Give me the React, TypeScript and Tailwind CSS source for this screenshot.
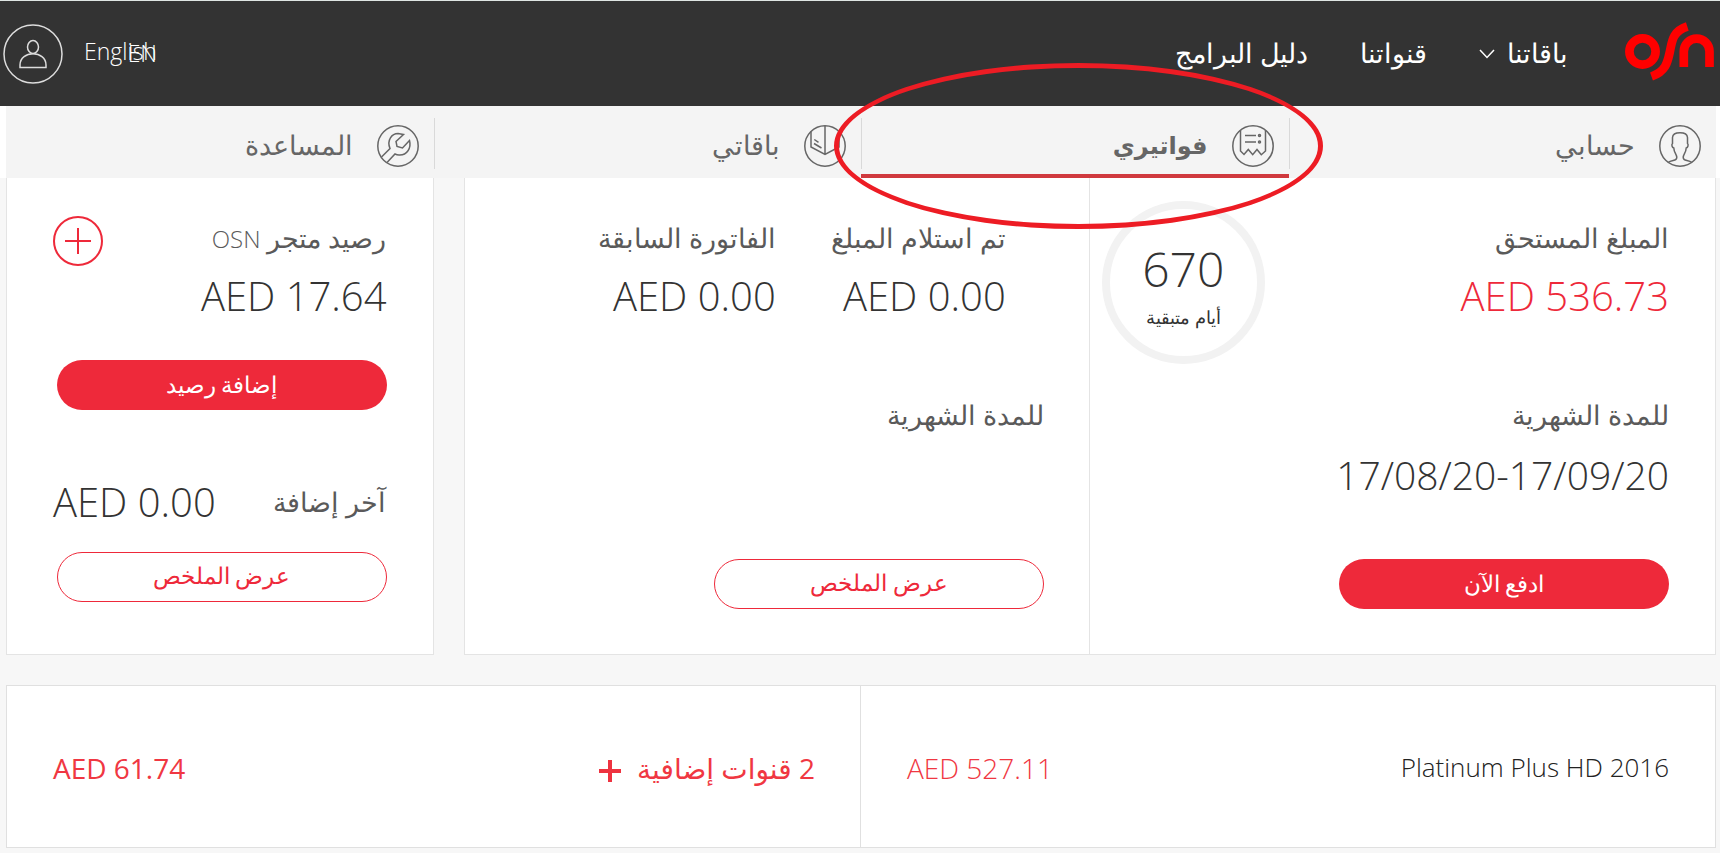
import { ReactNode } from 'react';

const tabs = [
  { id: 'account', label: 'حسابي', active: false },
  { id: 'bills', label: 'فواتيري', active: true },
  { id: 'packages', label: 'باقاتي', active: false },
  { id: 'help', label: 'المساعدة', active: false },
];

function TabIcon({ id }: { id: string }) {
  return (
    <svg width="42" height="42" viewBox="0 0 42 42" fill="none" stroke="#666" strokeWidth="1.5" aria-hidden="true">
      <circle cx="21" cy="21" r="20.2" />
      {id === 'account' && (
        <path d="M9 37.500C13 34.500 17.800 36.500 17.800 32.500C17.800 29 15 28 14.800 23C13 22.500 12.300 19.500 13.500 18.500V12.500C13.800 8.500 17 7.800 21 7.800C25 7.800 28.200 8.500 28.500 12.500V18.500C29.700 19.500 29 22.500 27.200 23C27 28 24.200 29 24.200 32.500C24.200 36.500 29 34.500 33 37.500" />
      )}
      {id === 'bills' && (
        <>
          <path d="M8.500 5V26L12 29.500L16.300 24.500L20.700 29.700L25 24.500L29.300 29.700L33.500 26V5" />
          <path d="M13 10.500H24M13 17H24" />
          <circle cx="27.500" cy="10.500" r="1" />
          <circle cx="27.500" cy="17" r="1" />
        </>
      )}
      {id === 'packages' && (
        <path d="M7 6.500V22L21 29.500L35 22V6.500M21 1V29.500M10.300 14.500L14.500 17.300M10 18.500L17.500 23" />
      )}
      {id === 'help' && (
        <path d="M4.500 32L13 23.500C9.500 15 15 8.500 21 8.500L26.500 9.500L19 16.500L20 21.500L25.500 23L32.500 15.500C34.500 23 30 30.500 22 30C20.500 30 19 29.500 18 29L10 37.500" />
      )}
    </svg>
  );
}

function Logo() {
  return (
    <svg width="92" height="60" viewBox="0 0 92 60" fill="none" stroke="#f00" strokeWidth="8.7" aria-label="OSN" role="img">
      <circle cx="18.500" cy="29.500" r="13.100" />
      <path d="M63.300 4.500C48 9.500 48 20 45.800 30C43.600 40 42 49.500 27.500 54.500" />
      <path d="M59.800 45V29.400A12.850 12.850 0 0 1 85.500 29.400V45" />
    </svg>
  );
}

function Amount({ children, red }: { children: ReactNode; red?: boolean }) {
  return (
    <p dir="ltr" className={red ? 'text-[40px] leading-[56px] text-[#ee293a]' : 'text-[40px] leading-[56px] text-[#333]'}>
      {children}
    </p>
  );
}

function Label({ children }: { children: ReactNode }) {
  return <p className="text-[27px] leading-[38px] text-[#5a5a5a]">{children}</p>;
}

function PillButton({ children, outline }: { children: ReactNode; outline?: boolean }) {
  return (
    <button
      type="button"
      className={
        outline
          ? 'h-[50px] w-[330px] rounded-full border border-[#ee293a] pb-1 text-[23px] text-[#ee293a]'
          : 'h-[50px] w-[330px] rounded-full bg-[#ee293a] pb-0.5 text-[23px] text-white'
      }
    >
      {children}
    </button>
  );
}

export default function App() {
  return (
    <div dir="rtl" className="relative min-h-screen bg-[#f7f7f7] font-['Open_Sans','DejaVu_Sans',sans-serif] font-light">
      <header className="flex h-[106px] items-center justify-between border-t border-[#dfe5e3] bg-[#333] pr-1 pl-[3px] text-white">
        <nav className="flex items-center text-[27px]">
          <a href="#home" className="pb-1"><Logo /></a>
          <a href="#packages" className="mr-14 flex items-center gap-3">
            باقاتنا
            <svg width="16" height="10" viewBox="0 0 16 10" fill="none" stroke="#fff" strokeWidth="1.5" aria-hidden="true">
              <path d="M1 1L8 8.500L15 1" />
            </svg>
          </a>
          <a href="#channels" className="mr-13">قنواتنا</a>
          <a href="#guide" className="mr-13">دليل البرامج</a>
        </nav>
        <div dir="ltr" className="flex items-center gap-[21px]">
          <a href="#profile" aria-label="الملف الشخصي">
            <svg width="60" height="60" viewBox="0 0 60 60" fill="none" stroke="#ddd" strokeWidth="1.5" aria-hidden="true">
              <circle cx="30" cy="30" r="29" />
              <ellipse cx="30" cy="23" rx="5.500" ry="6.500" />
              <path d="M17 43.500V41C17 26 43 26 43 41V43.500Z" />
            </svg>
          </a>
          <a href="#english" className="relative mb-1 text-[23px]">
            English
            <span className="absolute top-0.5 right-0">EN</span>
          </a>
        </div>
      </header>

      <div className="bg-white pr-1 pl-1.5">
        <nav className="grid grid-cols-4 bg-[#f4f4f4]">
          {tabs.map((tab) => (
            <a
              key={tab.id}
              href={`#${tab.id}`}
              className={
                tab.active
                  ? 'flex h-[72px] border-b-4 border-[#d0393e] pt-3 text-2xl font-bold text-[#666]'
                  : 'flex h-[72px] pt-3 text-[27px] text-[#666]'
              }
            >
              <span className="flex h-[56px] grow items-center gap-6 pr-[15px]">
                <TabIcon id={tab.id} />
                <span className="pb-0.5">{tab.label}</span>
              </span>
              {tab.id !== 'help' && <span className="h-[51px] w-px bg-[#d9d9d9]" />}
            </a>
          ))}
        </nav>
      </div>

      <main className="pr-1 pl-1.5">
        <div className="flex gap-[30px]">
          <section className="grid grow grid-cols-2 border border-t-0 border-[#e4e4e4] bg-white">
            <div className="flex flex-col pt-[23px] pr-[46px] pb-[45px]">
              <div className="flex h-[163px] justify-between pl-3">
                <div className="flex flex-col gap-[11px] pt-[18px]">
                  <Label>المبلغ المستحق</Label>
                  <Amount red>AED 536.73</Amount>
                </div>
                <div className="flex size-[163px] flex-col items-center rounded-full border-8 border-[#f2f2f2] pt-7 text-[#333]">
                  <p className="text-5xl leading-[64px]">670</p>
                  <p className="text-[18px] leading-[32px]">أيام متبقية</p>
                </div>
              </div>
              <div className="pt-8">
                <Label>للمدة الشهرية</Label>
                <p dir="ltr" className="pt-[11px] text-right text-[39px] leading-[60px] text-[#333]">17/08/20-17/09/20</p>
              </div>
              <div className="pt-[54px]"><PillButton>ادفع الآن</PillButton></div>
            </div>
            <div className="flex flex-col border-r border-[#e4e4e4] pt-[41px] pr-[45px] pb-[45px]">
              <div className="flex h-[145px] pr-[38px]">
                <div className="flex w-[230px] flex-col items-start gap-[11px]">
                  <Label>تم استلام المبلغ</Label>
                  <Amount>AED 0.00</Amount>
                </div>
                <div className="flex flex-col items-start gap-[11px]">
                  <Label>الفاتورة السابقة</Label>
                  <Amount>AED 0.00</Amount>
                </div>
              </div>
              <div className="grow pt-8"><Label>للمدة الشهرية</Label></div>
              <div><PillButton outline>عرض الملخص</PillButton></div>
            </div>
          </section>

          <section className="w-1/4 border border-t-0 border-[#e4e4e4] bg-white pt-[38px] pr-[46px] pb-[51px] pl-[46px]">
            <div className="flex justify-between">
              <div className="flex flex-col gap-[11px] pt-[3px]">
                <Label>رصيد متجر <span className="text-2xl">OSN</span></Label>
                <Amount>AED 17.64</Amount>
              </div>
              <button type="button" aria-label="إضافة رصيد" className="size-[50px]">
                <svg width="50" height="50" viewBox="0 0 50 50" fill="none" stroke="#ee293a" strokeWidth="2" aria-hidden="true">
                  <circle cx="25" cy="25" r="24" />
                  <path d="M12 25H38M25 12V38" />
                </svg>
              </button>
            </div>
            <div className="pt-[36px]"><PillButton>إضافة رصيد</PillButton></div>
            <div className="flex items-center justify-between pt-16 pb-[22px]">
              <Label>آخر إضافة</Label>
              <Amount>AED 0.00</Amount>
            </div>
            <PillButton outline>عرض الملخص</PillButton>
          </section>
        </div>

        <section className="mt-[30px] grid grid-cols-2 border border-[#e0e0e0] bg-white text-[28px]">
          <div className="flex h-[161px] items-center justify-between pt-0.5 pr-[46px] pl-[46px]">
            <p className="text-[26px] text-[#222]">Platinum Plus HD 2016</p>
            <p dir="ltr" className="text-[#f03742]">AED 527.11</p>
          </div>
          <div className="flex h-[161px] items-center justify-between border-r border-[#e0e0e0] pt-0.5 pr-[45px] pl-[46px] font-normal text-[#f03742]">
            <a href="#extras" className="flex items-center gap-4">
              2 قنوات إضافية
              <svg width="22" height="28" viewBox="0 0 22 28" fill="none" stroke="#ee3340" strokeWidth="4" aria-hidden="true">
                <path d="M0 17H22M11 6V28" />
              </svg>
            </a>
            <p dir="ltr">AED 61.74</p>
          </div>
        </section>
      </main>

      {/* marker around the bills tab */}
      <div className="pointer-events-none absolute top-[63px] left-[834px] h-[166px] w-[489px] rounded-[50%] border-[5px] border-[#ed1c24]" />
    </div>
  );
}
